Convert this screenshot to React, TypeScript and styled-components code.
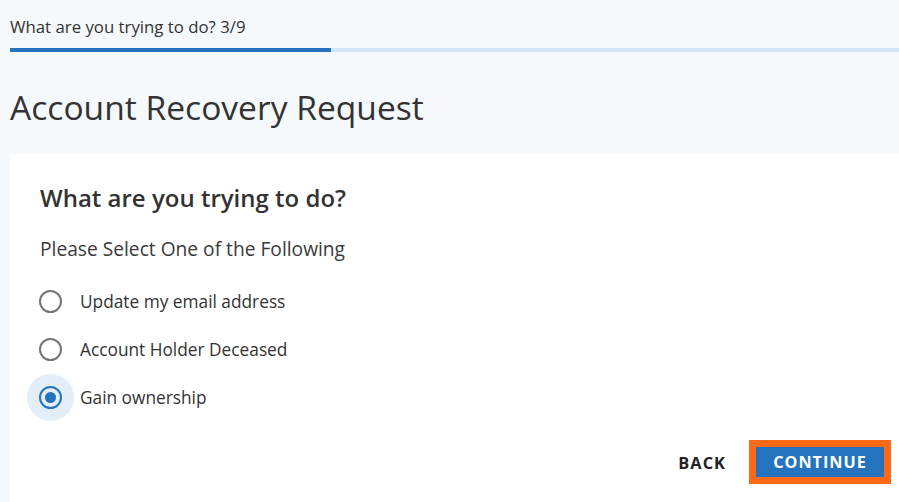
import React, { useState } from "react";
import styled, { createGlobalStyle } from "styled-components";

const Global = createGlobalStyle`
  html, body { margin: 0; padding: 0; background: #f5f9fc; }
  body { font-family: "Open Sans", "Noto Sans", sans-serif; color: #333; }
  * { box-sizing: border-box; }
`;

const Page = styled.div`
  width: 899px;
  height: 502px;
  overflow: hidden;
  background: #f5f9fc;
  padding-left: 10px;
  display: flex;
  flex-direction: column;
`;

const StepLabel = styled.div`
  font-size: 16.8px;
  line-height: 22px;
  color: #333;
  padding-top: 16px;
  height: 48px;
`;

const Track = styled.div`
  height: 4px;
  background: #d3e6f8;
  display: flex;
`;

const Fill = styled.div`
  height: 100%;
  background: #2573bf;
`;

const Title = styled.h1`
  margin: 0;
  font-size: 33.6px;
  font-weight: 400;
  line-height: 44px;
  color: #333;
  padding-top: 33px;
  height: 102px;
`;

const Card = styled.section`
  flex: 1;
  background: #fff;
  padding: 28px 0 0 30px;
  display: flex;
  flex-direction: column;
`;

const Heading = styled.h2`
  margin: 0;
  font-size: 24px;
  font-weight: 600;
  line-height: 32px;
  color: #333;
`;

const Prompt = styled.p`
  margin: 22px 0 0;
  font-size: 19.2px;
  line-height: 26px;
  color: #3a3a3a;
`;

const Options = styled.div`
  margin-top: 15px;
  display: flex;
  flex-direction: column;
`;

const Option = styled.label`
  display: flex;
  align-items: center;
  height: 48px;
  gap: 6px;
  font-size: 17.3px;
  color: #333;
  cursor: pointer;
  margin-left: -13px;
`;

const Halo = styled.span<{ $on: boolean }>`
  width: 47px;
  height: 47px;
  border-radius: 50%;
  background: ${(p) => (p.$on ? "#e3eef8" : "transparent")};
  display: flex;
  align-items: center;
  justify-content: center;
  flex-shrink: 0;
`;

const Radio = styled.span<{ $on: boolean }>`
  width: 23px;
  height: 23px;
  border-radius: 50%;
  border: 2px solid ${(p) => (p.$on ? "#2573bf" : "#757575")};
  display: flex;
  align-items: center;
  justify-content: center;
  &::after {
    content: "";
    width: 11px;
    height: 11px;
    border-radius: 50%;
    background: ${(p) => (p.$on ? "#2573bf" : "transparent")};
  }
`;

const Actions = styled.div`
  margin-top: 26px;
  display: flex;
  align-items: center;
  justify-content: flex-end;
  gap: 30px;
  padding-right: 15px;
`;

const BackButton = styled.button`
  border: none;
  background: none;
  padding: 0;
  font-family: inherit;
  font-size: 16.4px;
  font-weight: 700;
  letter-spacing: 1px;
  color: #222;
  cursor: pointer;
`;

const ContinueButton = styled.button`
  border: none;
  background: #2573bf;
  color: #fff;
  font-family: inherit;
  font-size: 16.2px;
  font-weight: 700;
  letter-spacing: 1px;
  width: 128px;
  height: 30px;
  padding: 0;
  outline: 7px solid #fd6a16;
  box-shadow: 0 4px 10px rgba(0, 0, 0, 0.12);
  cursor: pointer;
`;

const choices = ["Update my email address", "Account Holder Deceased", "Gain ownership"];

export default function App() {
  const [sel, setSel] = useState(2);
  const progress = 36.1;
  return (
    <Page>
      <Global />
      <StepLabel>What are you trying to do? 3/9</StepLabel>
      <Track>
        <Fill style={{ width: `${progress}%` }} />
      </Track>
      <Title>Account Recovery Request</Title>
      <Card>
        <Heading>What are you trying to do?</Heading>
        <Prompt>Please Select One of the Following</Prompt>
        <Options>
          {choices.map((c, i) => (
            <Option key={c} onClick={() => setSel(i)}>
              <Halo $on={sel === i}>
                <Radio $on={sel === i} />
              </Halo>
              {c}
            </Option>
          ))}
        </Options>
        <Actions>
          <BackButton>BACK</BackButton>
          <ContinueButton>CONTINUE</ContinueButton>
        </Actions>
      </Card>
    </Page>
  );
}
